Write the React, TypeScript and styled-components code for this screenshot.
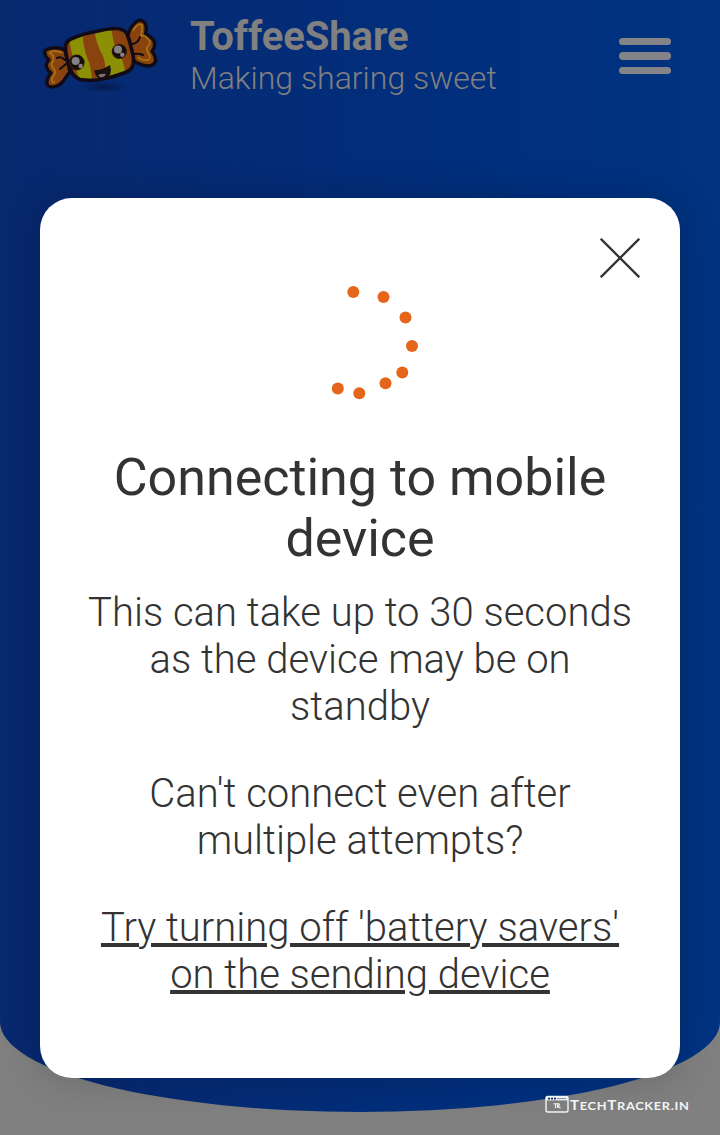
import React from 'react';
import styled, { createGlobalStyle } from 'styled-components';

const GlobalStyle = createGlobalStyle`
  * { box-sizing: border-box; }
  body { margin: 0; background: #808080; font-family: Roboto, "Liberation Sans", sans-serif; }
`;

const Page = styled.div`
  position: relative;
  height: 1135px;
  overflow: hidden;
  background: #808080;
`;

const Hero = styled.div`
  height: 1112px;
  background: linear-gradient(90deg, #08286f 0%, #00307f 75%, #003380 100%);
  border-radius: 0 0 50% 50% / 0 0 90px 90px;
`;

const Header = styled.header`
  display: flex;
  align-items: flex-start;
  height: 112px;
  padding: 11px 49px 0 40px;
`;

const Logo = styled.svg`
  flex: none;
  width: 120px;
  height: 90px;
`;

const Brand = styled.div`
  flex: 1;
  padding-left: 30px;
  color: #808080;
`;

const BrandName = styled.div`
  margin-top: 3px;
  font-size: 40px;
  line-height: 45px;
  font-weight: 700;
  letter-spacing: -0.1px;
`;

const Tagline = styled.div`
  font-size: 32px;
  line-height: 38px;
  font-weight: 300;
`;

const MenuButton = styled.button`
  display: flex;
  flex-direction: column;
  gap: 7px;
  width: 52px;
  margin: 27px 0 0;
  padding: 0;
  border: 0;
  background: none;
`;

const MenuBar = styled.span`
  height: 7.4px;
  border-radius: 4px;
  background: #848388;
`;

const Dialog = styled.section`
  position: absolute;
  top: 198px;
  left: 40px;
  width: 640px;
  height: 880px;
  padding: 40px 40px 80px;
  border-radius: 32px;
  background: #fff;
  box-shadow: 0 0 40px rgba(0, 0, 0, 0.2);
  color: #333;
  text-align: center;
`;

const CloseButton = styled.button`
  display: block;
  width: 40px;
  height: 40px;
  margin: 0 0 0 auto;
  padding: 0;
  border: 0;
  background: none;
`;

const Glyph = styled.svg`
  display: block;
  flex: none;
`;

const Spinner = styled.svg`
  display: block;
  margin: 4px auto 45px;
`;

const Title = styled.h1`
  margin: 0 0 20px;
  font-size: 52px;
  line-height: 61px;
  font-weight: 400;
`;

const Message = styled.p`
  margin: 0 0 40px;
  font-size: 40px;
  line-height: 47px;
  font-weight: 300;
`;

const HelpLink = styled.a`
  color: inherit;
  text-decoration: underline;
  text-decoration-thickness: 4px;
  text-underline-offset: 2px;
`;

const Watermark = styled.div`
  position: absolute;
  left: 545px;
  top: 1093px;
  display: flex;
  align-items: center;
  gap: 1px;
  color: #f4f4f4;
`;

const WatermarkText = styled.span`
  display: block;
  margin-top: 3px;
  font-family: Lato, sans-serif;
  font-size: 11px;
  line-height: 18px;
  font-weight: 700;
  letter-spacing: 0.6px;
  white-space: nowrap;
  transform: scaleX(1.16);
  transform-origin: 0 50%;
`;

const Initial = styled.span`
  font-size: 13px;
`;

const DOTS = [
  [53.3, 22], [83.5, 27], [105.5, 47.5], [112, 76],
  [102.3, 102.5], [85.5, 113.3], [59.3, 123.3], [37.8, 118.5],
];

const BODY =
  'M72 38.5Q85 33 98 31Q106 29 114 28.5Q124 28 127 34Q130 41 132 51Q134 57 133.5 63Q133 70 124 73Q111 78 99 79.8Q88 81 80 79.5Q73 77 70.5 69Q66 58 65.5 48Q65 41 72 38.5Z';

const Candy = () => (
  <Logo viewBox="40 11 120 90">
    <defs>
      <radialGradient id="shade">
        <stop offset="0" stopColor="#051745" stopOpacity=".8" />
        <stop offset="1" stopColor="#051745" stopOpacity="0" />
      </radialGradient>
      <clipPath id="body">
        <path d={BODY} />
      </clipPath>
    </defs>
    <ellipse cx="104" cy="87" rx="24" ry="6" fill="url(#shade)" />
    <g stroke="#100b16" strokeWidth="3.4" strokeLinejoin="round" strokeLinecap="round">
      <path d="M65 50Q59 47 52 48Q43 49 45 54Q46 58 49 60Q45 64 47 68Q48 71 51 73Q47 78 47 82Q46 87 53 87Q60 86 64 80Q67 75 70 72Z" fill="#8a430f" />
      <path d="M128 35Q130 27 136 22Q141 18 145 23Q147 27 145.500 34Q152 37 154.500 42Q155 48 152 51Q156 57 155.500 61Q154 66 148 66Q139 65 133 60Z" fill="#8a430f" />
      <path d="M57 58Q61 56 65 60M60 69L66 64M131 44Q138 44 140 37M134 54Q138 53 143 55" fill="none" strokeWidth="2" />
    </g>
    <g fill="none" stroke="#a87b0e" strokeWidth="1.5" strokeLinejoin="round">
      <path d="M62 53Q53 49 49.500 53Q55 55 53 61Q50 65 54 69Q57 72 52 78Q51 83 55 82" />
      <path d="M133 31Q137 23 142 25Q142 31 141 36Q145 34 148 39Q152 42 147 47Q146 49 148 53Q152 58 148 60Q142 61 138 57" />
    </g>
    <g clipPath="url(#body)">
      <path d="M60 20H140V90H60Z" fill="#8b9005" />
      <path d="M60 28H69Q69 44 73 58Q75 70 82 84H72L60 65Z" fill="#8a430f" />
      <path d="M82 28H94Q96 44 103 56Q106 64 107 84H92Q92 69 87 57Q83 47 82 28Z" fill="#8a430f" />
      <path d="M111 22Q125 20 138 40V78H125Q126 62 116 49Q112 39 111 22Z" fill="#8a430f" />
    </g>
    <path d={BODY} fill="none" stroke="#100b16" strokeWidth="3.6" />
    <circle cx="76.700" cy="62.500" r="7.900" fill="#2b1708" />
    <circle cx="77" cy="62" r="6.500" fill="#150e0c" />
    <circle cx="75.700" cy="61" r="4" fill="#858184" />
    <circle cx="80.700" cy="66" r="2.200" fill="#858184" />
    <circle cx="119.300" cy="51.500" r="7.600" fill="#2b1708" />
    <circle cx="119.500" cy="51" r="6.300" fill="#150e0c" />
    <circle cx="118" cy="49.500" r="4" fill="#858184" />
    <circle cx="122.300" cy="54.800" r="2.200" fill="#858184" />
    <path d="M95 71Q104 70 109.500 66Q112 75 105 78Q97 80 95 71Z" fill="#17100c" stroke="#17100c" strokeWidth="1.500" strokeLinejoin="round" />
    <path d="M98 75Q102 73 106 74Q105 77 102 77.500Q99 77 98 75Z" fill="#7d6f74" />
  </Logo>
);

export default function App() {
  return (
    <Page>
      <GlobalStyle />
      <Hero>
        <Header>
          <Candy />
          <Brand>
            <BrandName>ToffeeShare</BrandName>
            <Tagline>Making sharing sweet</Tagline>
          </Brand>
          <MenuButton aria-label="Menu">
            <MenuBar />
            <MenuBar />
            <MenuBar />
          </MenuButton>
        </Header>
      </Hero>
      <Dialog role="dialog">
        <CloseButton aria-label="Close">
          <Glyph width="40" height="40" viewBox="0 0 40 40">
            <path d="M.7 .7L39.3 39.3M39.3 .7L.7 39.3" stroke="#333" strokeWidth="2.3" />
          </Glyph>
        </CloseButton>
        <Spinner width="120" height="120" viewBox="0 12 120 120">
          {DOTS.map(([x, y]) => (
            <circle key={x} cx={x} cy={y} r="6" fill="#e5661b" />
          ))}
        </Spinner>
        <Title>Connecting to mobile device</Title>
        <Message>This can take up to 30 seconds as the device may be on standby</Message>
        <Message>Can't connect even after multiple attempts?</Message>
        <Message>
          <HelpLink>Try turning off 'battery savers' on the sending device</HelpLink>
        </Message>
      </Dialog>
      <Watermark>
        <Glyph width="24" height="18" viewBox="0 0 24 18">
          <rect x="1" y="1.5" width="22" height="15.500" rx="1.5" fill="none" stroke="#f4f4f4" strokeWidth="1.4" />
          <path d="M1 3.400H23" stroke="#f4f4f4" strokeWidth="4" />
          <path d="M3 3.600H11" stroke="#08286f" strokeWidth="1.6" strokeDasharray="2 1" />
          <path d="M12 3.600H21" stroke="#7c86a8" strokeWidth="1" />
          <path d="M8.500 8.700H14.500M10.500 8.700V13M12.500 9V13M15 9.500L12.700 11L15.500 13.200" fill="none" stroke="#f4f4f4" strokeWidth="1.1" />
        </Glyph>
        <WatermarkText>
          <Initial>T</Initial>ECH<Initial>T</Initial>RACKER.IN
        </WatermarkText>
      </Watermark>
    </Page>
  );
}
